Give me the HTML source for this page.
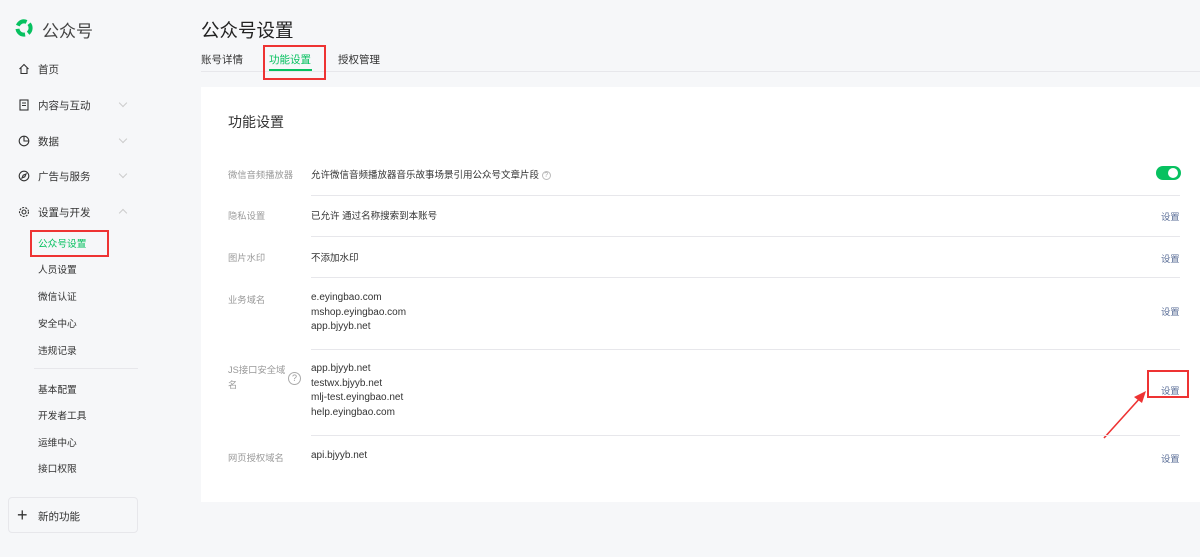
<!DOCTYPE html>
<html><head><meta charset="utf-8"><style>
*{margin:0;padding:0;box-sizing:border-box}
body{width:1200px;height:557px;background:#f6f7f9;font-family:"Liberation Sans","Noto Sans CJK SC",sans-serif;position:relative;overflow:hidden;color:#333}
.a{position:absolute;white-space:nowrap}
.nav{font-size:10.5px;color:#333}
.sub{font-size:9.7px;color:#333;left:38px}
.lab{font-size:9.3px;color:#999;left:228px}
.val{font-size:9.5px;color:#333;left:311px}
.dom{font-size:10px;color:#333;left:311px;line-height:14.7px}
.set{font-size:9.3px;color:#576b95;left:1161px}
.hr{position:absolute;left:311px;width:869px;height:1px;background:#e7e7eb}
.chev{position:absolute;width:6px;height:6px;border-right:1px solid #ccc;border-bottom:1px solid #ccc;transform:rotate(45deg);left:120px}
</style></head><body>
<svg class="a" style="left:14px;top:18px" width="20" height="20" viewBox="0 0 20 20"><circle cx="10" cy="10" r="6.6" fill="none" stroke="#07c160" stroke-width="4" stroke-dasharray="10.5 3.3" transform="rotate(-40 10 10)"/></svg>
<div class="a" style="left:42px;top:17px;font-size:17px;color:#444">公众号</div>

<svg class="a" style="left:18px;top:63px" width="12" height="12" viewBox="0 0 12 12" fill="none" stroke="#333" stroke-width="1.1"><path d="M1.5 6L6 1.5 10.5 6M3 5v5.5h6V5"/></svg>
<div class="a nav" style="left:38px;top:62px">首页</div>
<svg class="a" style="left:18px;top:99px" width="12" height="12" viewBox="0 0 12 12" fill="none" stroke="#333" stroke-width="1.1"><rect x="2" y="1" width="8" height="10"/><path d="M4 4h4M4 6.5h4"/></svg>
<div class="a nav" style="left:38px;top:98px">内容与互动</div><div class="chev" style="top:100px"></div>
<svg class="a" style="left:18px;top:135px" width="12" height="12" viewBox="0 0 12 12" fill="none" stroke="#333" stroke-width="1.1"><circle cx="6" cy="6" r="4.8"/><path d="M6 1.2V6h4.8"/></svg>
<div class="a nav" style="left:38px;top:134px">数据</div><div class="chev" style="top:136px"></div>
<svg class="a" style="left:18px;top:170px" width="12" height="12" viewBox="0 0 12 12" fill="none" stroke="#333" stroke-width="1.1"><circle cx="6" cy="6" r="4.8"/><path d="M8 4L6.8 6.8 4 8 5.2 5.2z"/></svg>
<div class="a nav" style="left:38px;top:169px">广告与服务</div><div class="chev" style="top:171px"></div>
<svg class="a" style="left:18px;top:206px" width="12" height="12" viewBox="0 0 12 12" fill="none" stroke="#333" stroke-width="1.1"><circle cx="6" cy="6" r="2"/><circle cx="6" cy="6" r="4.5" stroke-dasharray="2 1.2"/></svg>
<div class="a nav" style="left:38px;top:205px">设置与开发</div><div class="chev" style="top:210px;transform:rotate(225deg)"></div>

<div class="a sub" style="top:236px;color:#07c160">公众号设置</div>
<div class="a" style="left:30px;top:230px;width:79px;height:27px;border:2px solid #e33"></div>
<div class="a sub" style="top:262px">人员设置</div>
<div class="a sub" style="top:289px">微信认证</div>
<div class="a sub" style="top:316px">安全中心</div>
<div class="a sub" style="top:343px">违规记录</div>
<div class="a" style="left:34px;top:368px;width:104px;height:1px;background:#e7e7eb"></div>
<div class="a sub" style="top:382px">基本配置</div>
<div class="a sub" style="top:408px">开发者工具</div>
<div class="a sub" style="top:435px">运维中心</div>
<div class="a sub" style="top:461px">接口权限</div>
<div class="a" style="left:8px;top:497px;width:130px;height:36px;border:1px solid #e7e7eb;border-radius:4px"></div>
<div class="a" style="left:17px;top:507px;font-size:18px;color:#333;line-height:16px">+</div>
<div class="a nav" style="left:38px;top:509px">新的功能</div>

<div class="a" style="left:201px;top:17px;font-size:18.5px;color:#222">公众号设置</div>
<div class="a" style="left:201px;top:71px;width:999px;height:1px;background:#e7e7eb"></div>
<div class="a nav" style="left:201px;top:52px">账号详情</div>
<div class="a nav" style="left:269px;top:52px;color:#07c160">功能设置</div>
<div class="a" style="left:269px;top:69px;width:43px;height:2px;background:#07c160"></div>
<div class="a nav" style="left:338px;top:52px">授权管理</div>
<div class="a" style="left:263px;top:45px;width:63px;height:35px;border:2px solid #e33"></div>

<div class="a" style="left:201px;top:87px;width:999px;height:415px;background:#fff"></div>
<div class="a" style="left:228px;top:112px;font-size:14px;color:#333">功能设置</div>

<div class="a lab" style="top:167px">微信音频播放器</div>
<div class="a val" style="top:167px">允许微信音频播放器音乐故事场景引用公众号文章片段 <span style="display:inline-block;width:9px;height:9px;border:1px solid #bbb;border-radius:50%;font-size:7px;line-height:7px;text-align:center;color:#aaa;vertical-align:middle">?</span></div>
<div class="a" style="left:1156px;top:166px;width:25px;height:14px;border-radius:7px;background:#07c160"></div>
<div class="a" style="left:1168px;top:168px;width:10px;height:10px;border-radius:50%;background:#fff"></div>
<div class="hr" style="top:195px"></div>

<div class="a lab" style="top:208px">隐私设置</div>
<div class="a val" style="top:208px">已允许 通过名称搜索到本账号</div>
<div class="a set" style="top:209px">设置</div>
<div class="hr" style="top:236px"></div>

<div class="a lab" style="top:250px">图片水印</div>
<div class="a val" style="top:250px">不添加水印</div>
<div class="a set" style="top:251px">设置</div>
<div class="hr" style="top:277px"></div>

<div class="a lab" style="top:292px">业务域名</div>
<div class="a dom" style="top:291px">e.eyingbao.com<br>mshop.eyingbao.com<br>app.bjyyb.net</div>
<div class="a set" style="top:304px">设置</div>
<div class="hr" style="top:349px"></div>

<div class="a lab" style="top:363px;line-height:15px">JS接口安全域<br>名</div>
<div class="a" style="left:288px;top:372px;width:13px;height:13px;border:1px solid #aaa;border-radius:50%;font-size:9px;line-height:11px;text-align:center;color:#999">?</div>
<div class="a dom" style="top:362px">app.bjyyb.net<br>testwx.bjyyb.net<br>mlj-test.eyingbao.net<br>help.eyingbao.com</div>
<div class="a set" style="top:383px">设置</div>
<div class="a" style="left:1147px;top:370px;width:42px;height:28px;border:2px solid #e33"></div>
<svg class="a" style="left:1100px;top:388px" width="50" height="54" viewBox="0 0 50 54"><path d="M4 50L41 9" stroke="#e33" stroke-width="1.6"/><path d="M46 3L34 9 42 15z" fill="#e33"/></svg>
<div class="hr" style="top:435px"></div>

<div class="a lab" style="top:450px">网页授权域名</div>
<div class="a dom" style="top:449px">api.bjyyb.net</div>
<div class="a set" style="top:451px">设置</div>
</body></html>
